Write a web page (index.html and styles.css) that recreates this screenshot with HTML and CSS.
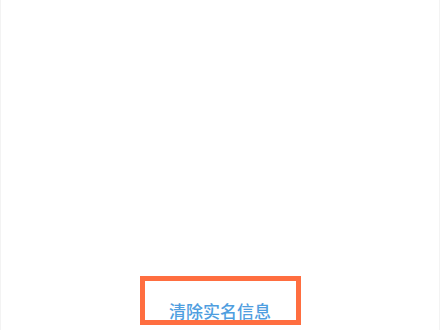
FILE: index.html
```html
<!DOCTYPE html>
<html lang="zh-CN">
<head>
    <meta charset="UTF-8">
    <meta name="viewport" content="width=device-width, initial-scale=1.0">
    <title>实名信息</title>
    <link rel="stylesheet" href="styles.css">
</head>
<body>

    <div class="page">
        <div class="content"></div>

        <div class="footer">
            <div class="highlight">
                <a class="clear-link" href="#">清除实名信息</a>
            </div>
        </div>
    </div>

</body>
</html>
```

FILE: styles.css
```css
/* Reset CSS */
* {
    margin: 0;
    padding: 0;
    box-sizing: border-box;
}

body {
    font-family: "Noto Sans CJK SC", "Noto Sans", sans-serif;
    background-color: #fff;
    color: #333;
}

.page {
    width: 440px;
    height: 330px;
    display: flex;
    flex-direction: column;
    border-left: 1px solid #f3f3f3;
    border-right: 1px solid #f3f3f3;
    overflow: hidden;
}

.content {
    flex: 1;
}

.footer {
    display: flex;
    justify-content: center;
    padding-bottom: 5px;
}

.highlight {
    width: 161px;
    height: 49px;
    border: 5px solid #ff6e40;
    text-align: center;
    padding-top: 18px;
}

.clear-link {
    font-size: 17px;
    line-height: 17px;
    font-weight: 500;
    color: #4f9ee0;
    text-decoration: none;
}
```
